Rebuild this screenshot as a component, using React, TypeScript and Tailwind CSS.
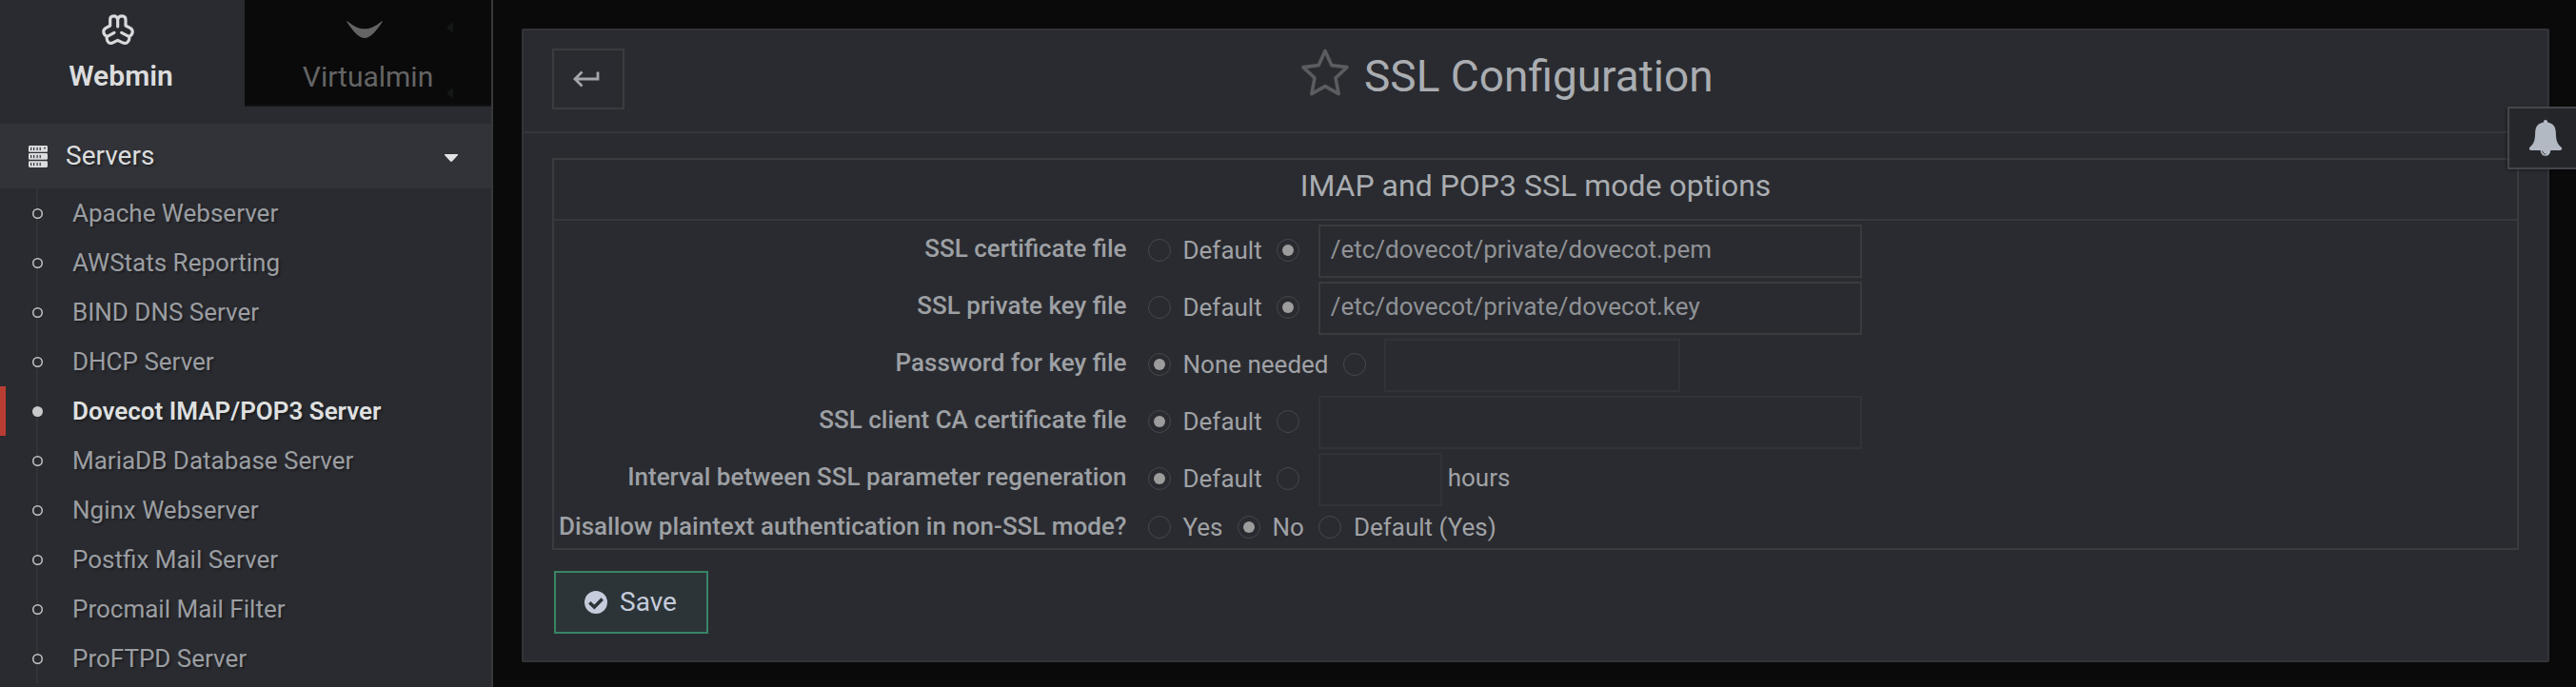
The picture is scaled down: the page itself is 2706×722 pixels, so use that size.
import React from 'react';

const modules = [
  'Apache Webserver',
  'AWStats Reporting',
  'BIND DNS Server',
  'DHCP Server',
  'Dovecot IMAP/POP3 Server',
  'MariaDB Database Server',
  'Nginx Webserver',
  'Postfix Mail Server',
  'Procmail Mail Filter',
  'ProFTPD Server',
];

function WebminIcon() {
  return (
    <svg className="h-[34px] w-[38px]" viewBox="309 42 114 102" preserveAspectRatio="none" fill="none" stroke="#d8d9da" strokeWidth="9.5" strokeLinecap="round" strokeLinejoin="round">
      <path d="M365 84V61C362 47 341 47 341 62V81L328 88C316 95 319 109 331 115C328 133 340 140 351 134L365 127L379 134C391 140 404 133 401 115C413 109 416 95 404 88L390 81V62C390 47 368 47 365 61" />
      <path d="M332 115L354 103M400 115L377 103" />
    </svg>
  );
}

function VirtualminIcon() {
  return (
    <svg className="h-[18px] w-[38px]" viewBox="0 0 38 18" fill="#646464">
      <path d="M.2.8Q0 0 .9.2C8 6 13 8.3 19 8.3S30 6 37 .2Q38 0 37.8.8C31 11 25 18 19 18S7 11 .2.8Z" />
    </svg>
  );
}

function ServersIcon() {
  return (
    <svg className="h-[23px] w-5" viewBox="0 0 20 23" fill="#dcdddf">
      {[0, 8.1, 16.2].map((y) => (
        <g key={y}>
          <rect y={y} width="20" height="6.7" rx="1.3" />
          {[2, 5, 8.5, 11.6].map((x) => (
            <rect key={x} x={x} y={y + 1.8} width="1.2" height="3.2" fill="#323338" />
          ))}
        </g>
      ))}
      <rect x="16.2" y="1.8" width="1.6" height="1.6" fill="#323338" />
    </svg>
  );
}

function BackIcon() {
  return (
    <svg className="h-[18px] w-7" viewBox="0 0 28 18" fill="none" stroke="#a3a6aa" strokeWidth="2.8">
      <path d="M9.5 1.5L2 9L9.5 16.5M2.5 9H26V1.5" />
    </svg>
  );
}

function StarIcon() {
  return (
    <svg className="h-[50px] w-[50px]" viewBox="0 0 50 50" fill="none" stroke="#5b5c5f" strokeWidth="3.6" strokeLinejoin="round">
      <path d="M25 2.5L31.8 17.6L48 19.6L36 31L39.2 47.6L25 39.6L10.8 47.6L14 31L2 19.6L18.2 17.6Z" />
    </svg>
  );
}

function BellIcon() {
  return (
    <svg className="h-[38px] w-9" viewBox="0 0 36 38" fill="#b2b9c3">
      <path d="M18 0C19.5 0 20.2 1 20.1 2.6C25.5 3.6 28.6 7 28.8 12.5C29 21 29.8 25 35 29.2C35.6 30.7 34.5 32 33 32H23.3C23.2 35.5 21 37.8 18 37.8S12.8 35.5 12.7 32H3C1.5 32 .4 30.7 1 29.2C6.2 25 7 21 7.2 12.5C7.4 7 10.5 3.6 15.9 2.6C15.8 1 16.5 0 18 0Z" />
      <path d="M14.6 32.5C14.8 34.7 16 35.9 18.2 36.1" fill="none" stroke="#3a3c41" strokeWidth="1" />
    </svg>
  );
}

function CheckCircleIcon() {
  return (
    <svg className="h-6 w-6" viewBox="0 0 24 24">
      <circle cx="12" cy="12" r="12" fill="#c5ccdb" />
      <path d="M5.3 12.2L10.3 17L18.7 8.5" fill="none" stroke="#2c3437" strokeWidth="3.5" />
    </svg>
  );
}

function Tab({ label, active, icon }: { label: string; active?: boolean; icon: React.ReactNode }) {
  return (
    <div
      className={
        active
          ? 'flex h-28 w-[257px] flex-col items-center pt-3.5 pr-[3px] text-[30px] font-semibold text-[#dcddde]'
          : 'relative flex h-28 w-[259px] flex-col items-center border-b-2 border-[#131315] bg-[#0a0a0a] pt-3.5 text-[30px] text-[#646464]'
      }
    >
      <div className={active ? 'mr-[7px] flex h-[34px] items-center' : 'mr-2 flex h-[34px] items-center'}>{icon}</div>
      <div className={active ? 'mt-[11px] leading-[42px]' : 'mt-3 leading-[42px]'}>{label}</div>
      {!active && (
        <svg className="absolute top-[23px] right-[40px] h-[82px] w-[7px]" viewBox="0 0 7 82" fill="#141716">
          <path d="M7 0V12L0 6ZM7 69V81L0 75Z" />
        </svg>
      )}
    </div>
  );
}

function Sidebar() {
  return (
    <aside className="flex h-[722px] w-[518px] shrink-0 flex-col overflow-hidden border-r-2 border-[#37383c] bg-[#2a2b30]">
      <div className="flex">
        <Tab label="Webmin" active icon={<WebminIcon />} />
        <Tab label="Virtualmin" icon={<VirtualminIcon />} />
      </div>
      <div className="mt-[18px] flex h-[68px] shrink-0 items-center bg-[#323338] pr-[35px] pl-[30px]">
        <ServersIcon />
        <span className="ml-[19px] flex-1 text-[28px] leading-[66px] text-[#dcddde] [text-shadow:2px_2px_2px_rgba(0,0,0,0.3)]">Servers</span>
        <svg className="mt-[3px] h-2 w-3.5" viewBox="0 0 14 8" fill="#e2e3e4">
          <path d="M0 0H14V1L8 7.5Q7 8.3 6 7.5L0 1Z" />
        </svg>
      </div>
      <nav className="relative shrink-0">
        <div className="absolute top-0 left-[38px] h-full w-0.5 bg-[#323338]" />
        {modules.map((name) => {
          const active = name === 'Dovecot IMAP/POP3 Server';
          return (
            <div
              key={name}
              className={
                active
                  ? 'flex h-[52px] items-center border-l-[6px] border-[#b93d32] pl-7 text-[26px] font-semibold text-[#dfe0e0]'
                  : 'flex h-[52px] items-center pl-[34px] text-[26px] text-[#9b9ea2]'
              }
            >
              {active ? (
                <span className="relative h-[11px] w-[11px] rounded-full bg-[#c8c9cb]" />
              ) : (
                <svg className="relative h-[11px] w-[11px]" viewBox="0 0 11 11" fill="#2a2b30" stroke="#c4c5c8" strokeWidth="1.5">
                  <circle cx="5.5" cy="5.5" r="4.75" />
                </svg>
              )}
              <span className="ml-[31px] leading-[52px] [text-shadow:2px_2px_2px_rgba(0,0,0,0.3)]">{name}</span>
            </div>
          );
        })}
      </nav>
    </aside>
  );
}

function Radio({ checked, label }: { checked?: boolean; label?: string }) {
  return (
    <span className="flex items-center">
      <span className="flex h-6 w-6 items-center justify-center rounded-full border border-[#47484c]">
        {checked && <span className="h-3 w-3 rounded-full bg-[#9c9c9c]" />}
      </span>
      {label && <span className="ml-[13px]">{label}</span>}
    </span>
  );
}

function Row({ label, options, children, last }: { label: string; options: { label?: string; checked?: boolean }[]; children?: React.ReactNode; last?: boolean }) {
  return (
    <div className={last ? 'flex h-[42px]' : 'flex h-[60px]'}>
      <div className={last ? 'w-[601.5px] text-right leading-[39px] font-medium text-[#9da0a4]' : 'w-[601.5px] text-right leading-[54px] font-medium text-[#9da0a4]'}>{label}</div>
      <div className={last ? 'ml-[22px] flex h-10 gap-[15px]' : 'ml-[22px] flex h-[58px] gap-[15px]'}>
        {options.map((o, i) => (
          <Radio key={i} label={o.label} checked={o.checked} />
        ))}
      </div>
      {children}
    </div>
  );
}

export default function App() {
  return (
    <div className="relative flex h-[722px] w-[2706px] overflow-hidden bg-[#0a0a0a] font-['Roboto',sans-serif]">
      <Sidebar />
      <main className="flex-1 pt-[30px] pr-7 pl-[30px]">
        <section className="h-[666px] rounded-[2px] border-2 border-[#333438] bg-[#2a2b30]">
          <header className="flex h-[108px] border-b-2 border-[#37383c]">
            <div className="mt-[19px] ml-[30px] flex h-16 w-[76px] items-center justify-center border-2 border-[#3b3c40] pr-1">
              <BackIcon />
            </div>
            <div className="ml-[711px] flex">
              <div className="mt-[19px]">
                <StarIcon />
              </div>
              <h1 className="ml-[16px] text-[46px] leading-[96px] text-[#a9adb1]">SSL Configuration</h1>
            </div>
          </header>
          <div className="mx-[30px] mt-[26px] h-[412px] border-2 border-[#3a3b3f] text-[26px] text-[#a0a2a6]">
            <h2 className="h-16 border-b-2 border-[#37383c] text-center text-[32px] leading-[54px] text-[#a9adb1]">IMAP and POP3 SSL mode options</h2>
            <div className="pt-0.5">
              <Row label="SSL certificate file" options={[{ label: 'Default' }, { checked: true }]}>
                <div className="mt-0.5 ml-5 h-14 w-[571px] border-2 border-[#3a3b3f] pl-[11px] leading-[49px] text-[#8f9296]">/etc/dovecot/private/dovecot.pem</div>
              </Row>
              <Row label="SSL private key file" options={[{ label: 'Default' }, { checked: true }]}>
                <div className="mt-0.5 ml-5 h-14 w-[571px] border-2 border-[#3a3b3f] pl-[11px] leading-[49px] text-[#8f9296]">/etc/dovecot/private/dovecot.key</div>
              </Row>
              <Row label="Password for key file" options={[{ label: 'None needed', checked: true }, {}]}>
                <div className="mt-0.5 ml-[19px] h-14 w-[311px] border-2 border-[#323338]" />
              </Row>
              <Row label="SSL client CA certificate file" options={[{ label: 'Default', checked: true }, {}]}>
                <div className="mt-0.5 ml-5 h-14 w-[571px] border-2 border-[#323338]" />
              </Row>
              <Row label="Interval between SSL parameter regeneration" options={[{ label: 'Default', checked: true }, {}]}>
                <div className="mt-0.5 ml-5 h-14 w-[130px] border-2 border-[#323338]" />
                <span className="ml-1.5 leading-[56px]">hours</span>
              </Row>
              <Row last label="Disallow plaintext authentication in non-SSL mode?" options={[{ label: 'Yes' }, { label: 'No', checked: true }, { label: 'Default (Yes)' }]} />
            </div>
          </div>
          <button className="mt-[22px] ml-8 flex h-[66px] w-[162px] items-center border-2 border-[#388566] bg-[#2c3437] pl-[30px] text-[28px] leading-[60px] text-[#c5ccdb]">
            <CheckCircleIcon />
            <span className="ml-[13px]">Save</span>
          </button>
        </section>
      </main>
      <div className="absolute top-28 right-0 flex h-[66px] w-[72px] items-center border-2 border-r-0 border-[#43464b] bg-[#25272b]/95 pl-5 shadow-[-1px_1px_3px_rgba(0,0,0,0.35)]">
        <BellIcon />
      </div>
    </div>
  );
}
